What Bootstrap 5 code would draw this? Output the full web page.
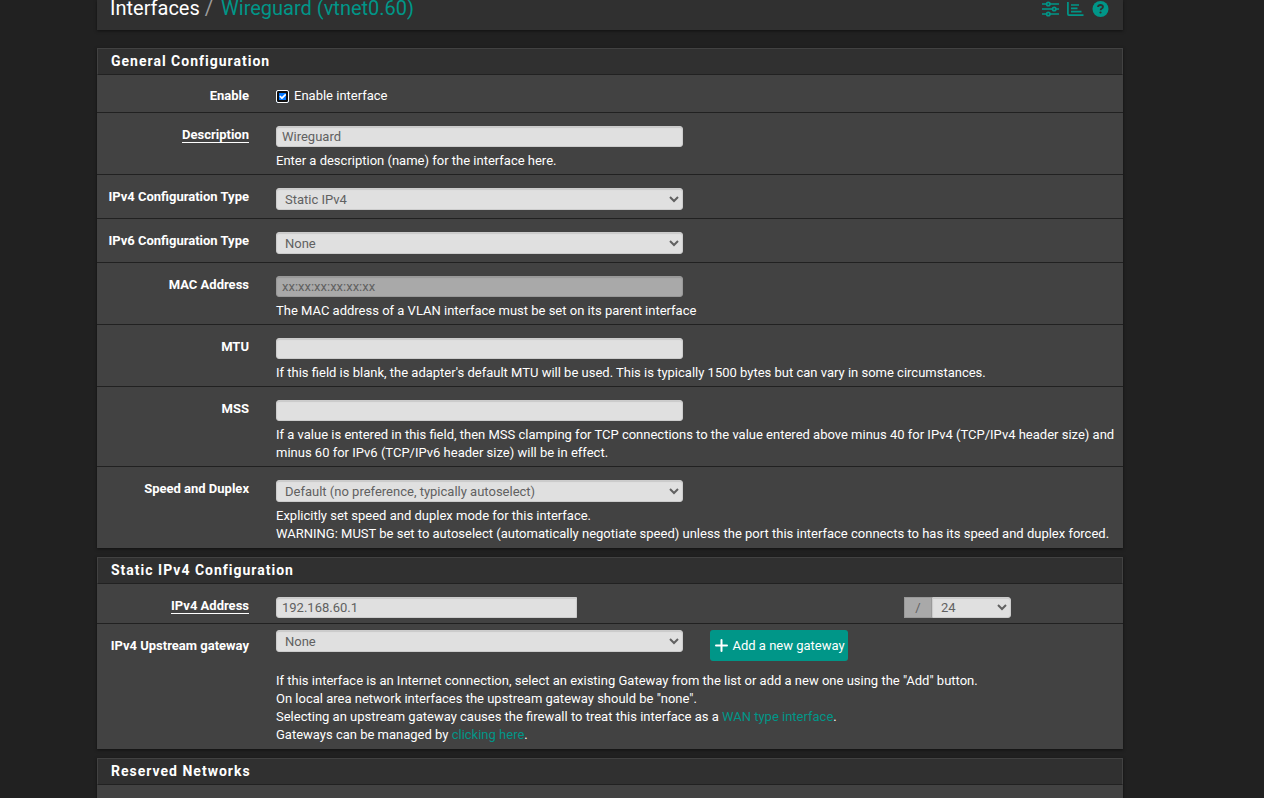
<!DOCTYPE html>
<html lang="en">
<head>
<meta charset="utf-8">
<meta name="viewport" content="width=device-width, initial-scale=1">
<title>Interfaces: Wireguard (vtnet0.60)</title>
<link href="https://cdn.jsdelivr.net/npm/bootstrap@5.3.0/dist/css/bootstrap.min.css" rel="stylesheet">
<script src="https://cdn.jsdelivr.net/npm/bootstrap@5.3.0/dist/js/bootstrap.bundle.min.js"></script>
<style>
html { overflow: hidden; }
body { background: #212121; color: #fff; font: 13px/18px Roboto, sans-serif; }
a { color: #009688; text-decoration: none; }
.page { padding: 0 141px 0 97px; }
.topbar { background: #303030; padding: 0 14px 14px 13px; margin-bottom: 18px; box-shadow: 0 1px 3px rgba(0,0,0,.5); }
.crumbs { font-size: 20px; line-height: 16px; }
.crumbs .breadcrumb-item { padding: 0; }
.crumbs .breadcrumb-item a { color: #009688; }
.crumbs .breadcrumb-item + .breadcrumb-item::before { color: #9e9e9e; padding: 0 8px 0 5px; }
.tools { gap: 8px; }
.tools a { display: block; height: 16px; }
.tools svg { display: block; }
.panel { background: #424242; margin-bottom: 9px; padding-bottom: 1px; box-shadow: 0 1px 3px rgba(0,0,0,.5); }
.panel-title { background: #303030; border: 1px solid #424242; border-bottom-color: #212121; padding: 3px 13px 4px; margin: 0; font-size: 14px; line-height: 18px; font-weight: 700; letter-spacing: 1px; }
.setting { border-bottom: 1px solid #212121; }
.setting:last-child { border-bottom: 0; }
.setting-label { padding: 13px 19px 0 0; text-align: right; font-weight: 700; white-space: nowrap; }
.setting-label.for-check { padding-top: 12px; }
.setting-label.required span { border-bottom: 1px solid #fff; }
.setting-body { padding: 13px 6px 4px 8px; }
.setting-body.only-select { padding-bottom: 8px; }
.setting-body.only-check { padding: 12px 6px 7px 8px; }
.setting-body.only-address { padding-bottom: 5px; }
.setting-body.gateway { padding-top: 6px; }
.half { padding-right: 14px; }
.setting .form-control { height: 21px; padding: 0 5px; border: 1px solid #ccc; border-radius: 3px; background: #e0e0e0; color: #616161; font-size: 13px; line-height: 18px; box-shadow: inset 0 1px 1px rgba(0,0,0,.1); }
.setting select.form-control { height: 22px; appearance: auto; padding: 0 4px; }
.setting .form-control:disabled { background: #a9a9a9; border-color: #999; }
.setting .form-control::placeholder { color: #616161; opacity: 1; }
.help { padding-top: 5px; }
.form-check-input.tick { width: 13px; height: 13px; margin: 3px 5px 0 0; border: 1px solid #fff; border-radius: 2px; box-shadow: inset 0 0 0 2px #101010; }
.form-check-input.tick:checked { background-color: #0075ff; background-size: 11px 11px; border-color: #fff; }
.address { margin-right: 106px; }
.address-ip { width: 41%; }
.setting .address-ip .form-control { border-radius: 3px 0 0 3px; }
.setting .mask .input-group-text { width: 28px; height: 21px; padding: 0; border: 1px solid #999; border-radius: 0; background: #a9a9a9; color: #616161; font-size: 13px; line-height: 18px; justify-content: center; }
.setting .mask select.form-control { width: 79px; height: 21px; border-radius: 0 3px 3px 0; }
.btn-add { --bs-btn-color: #fff; --bs-btn-bg: #009688; --bs-btn-hover-color: #fff; --bs-btn-hover-bg: #00796b; gap: 5px; height: 31px; margin-left: 13px; padding: 0 3px 0 5px; border: 0; border-radius: 3px; font-size: 13px; line-height: 18px; }
.gateway .help { padding-top: 11px; }
</style>
</head>
<body>
<main class="page">
  <header class="topbar d-flex justify-content-between">
    <nav aria-label="breadcrumb">
      <ol class="breadcrumb crumbs mb-0">
        <li class="breadcrumb-item">Interfaces</li>
        <li class="breadcrumb-item"><a href="#">Wireguard (vtnet0.60)</a></li>
      </ol>
    </nav>
    <div class="tools d-flex">
      <a href="#" aria-label="Advanced settings"><svg width="17" height="17" viewBox="0 0 17 17" fill="none" stroke="#009688" stroke-width="1.7"><path d="M0 4h4.500M8 4h9M0 9h10.500M14 9h3M0 14h4.500M8 14h9"/><circle cx="6.300" cy="4" r="1.700"/><circle cx="12.200" cy="9" r="1.700"/><circle cx="6.300" cy="14" r="1.700"/></svg></a>
      <a href="#" aria-label="Status"><svg width="17" height="17" viewBox="0 0 17 17" fill="none" stroke="#009688" stroke-width="1.700"><path d="M.9 2v12.100q0 1 1 1H16.500M4 5h8M4 8.300h6.500M4 11.600h10.500" /></svg></a>
      <a href="#" aria-label="Help"><svg width="17" height="17" viewBox="0 0 17 17"><circle cx="8.500" cy="9" r="8" fill="#009688"/><path d="M6 7q.2-2 2.500-2t2.500 1.800q0 1-1.200 1.700-1.200.6-1.200 1.700" fill="none" stroke="#303030" stroke-width="1.800"/><circle cx="8.500" cy="12.500" r="1.100" fill="#303030"/></svg></a>
    </div>
  </header>

  <form>
    <section class="panel">
      <h2 class="panel-title">General Configuration</h2>
      <div class="row g-0 setting">
        <div class="col-2 setting-label for-check">Enable</div>
        <div class="col-10 setting-body only-check">
          <div class="d-flex"><input class="form-check-input tick" type="checkbox" id="enable" checked><label for="enable">Enable interface</label></div>
        </div>
      </div>
      <div class="row g-0 setting">
        <label class="col-2 setting-label required" for="descr"><span>Description</span></label>
        <div class="col-10 setting-body">
          <div class="row g-0"><div class="col-6 half"><input class="form-control" type="text" id="descr" value="Wireguard"></div></div>
          <div class="help">Enter a description (name) for the interface here.</div>
        </div>
      </div>
      <div class="row g-0 setting">
        <label class="col-2 setting-label" for="type4">IPv4 Configuration Type</label>
        <div class="col-10 setting-body only-select">
          <div class="row g-0"><div class="col-6 half"><select class="form-control" id="type4"><option>Static IPv4</option></select></div></div>
        </div>
      </div>
      <div class="row g-0 setting">
        <label class="col-2 setting-label" for="type6">IPv6 Configuration Type</label>
        <div class="col-10 setting-body only-select">
          <div class="row g-0"><div class="col-6 half"><select class="form-control" id="type6"><option>None</option></select></div></div>
        </div>
      </div>
      <div class="row g-0 setting">
        <label class="col-2 setting-label" for="mac">MAC Address</label>
        <div class="col-10 setting-body">
          <div class="row g-0"><div class="col-6 half"><input class="form-control" type="text" id="mac" placeholder="xx:xx:xx:xx:xx:xx" disabled></div></div>
          <div class="help">The MAC address of a VLAN interface must be set on its parent interface</div>
        </div>
      </div>
      <div class="row g-0 setting">
        <label class="col-2 setting-label" for="mtu">MTU</label>
        <div class="col-10 setting-body">
          <div class="row g-0"><div class="col-6 half"><input class="form-control" type="text" id="mtu"></div></div>
          <div class="help">If this field is blank, the adapter's default MTU will be used. This is typically 1500 bytes but can vary in some circumstances.</div>
        </div>
      </div>
      <div class="row g-0 setting">
        <label class="col-2 setting-label" for="mss">MSS</label>
        <div class="col-10 setting-body">
          <div class="row g-0"><div class="col-6 half"><input class="form-control" type="text" id="mss"></div></div>
          <div class="help">If a value is entered in this field, then MSS clamping for TCP connections to the value entered above minus 40 for IPv4 (TCP/IPv4 header size) and minus 60 for IPv6 (TCP/IPv6 header size) will be in effect.</div>
        </div>
      </div>
      <div class="row g-0 setting">
        <label class="col-2 setting-label" for="media">Speed and Duplex</label>
        <div class="col-10 setting-body">
          <div class="row g-0"><div class="col-6 half"><select class="form-control" id="media"><option>Default (no preference, typically autoselect)</option></select></div></div>
          <div class="help">Explicitly set speed and duplex mode for this interface.<br>WARNING: MUST be set to autoselect (automatically negotiate speed) unless the port this interface connects to has its speed and duplex forced.</div>
        </div>
      </div>
    </section>

    <section class="panel">
      <h2 class="panel-title">Static IPv4 Configuration</h2>
      <div class="row g-0 setting">
        <label class="col-2 setting-label required" for="ip"><span>IPv4 Address</span></label>
        <div class="col-10 setting-body only-address">
          <div class="address d-flex justify-content-between">
            <div class="address-ip"><input class="form-control" type="text" id="ip" value="192.168.60.1"></div>
            <div class="mask d-flex"><span class="input-group-text">/</span><select class="form-control" aria-label="Subnet mask"><option>24</option></select></div>
          </div>
        </div>
      </div>
      <div class="row g-0 setting">
        <label class="col-2 setting-label" for="gw">IPv4 Upstream gateway</label>
        <div class="col-10 setting-body gateway">
          <div class="row g-0">
            <div class="col-6 half"><select class="form-control" id="gw"><option>None</option></select></div>
            <div class="col-6"><button type="button" class="btn btn-add d-flex align-items-center"><svg width="13" height="13" viewBox="0 0 13 13" stroke="#fff" stroke-width="2" stroke-linecap="round"><path d="M6.500 1v11M1 6.500h11"/></svg>Add a new gateway</button></div>
          </div>
          <div class="help">If this interface is an Internet connection, select an existing Gateway from the list or add a new one using the "Add" button.<br>On local area network interfaces the upstream gateway should be "none".<br>Selecting an upstream gateway causes the firewall to treat this interface as a <a href="#">WAN type interface</a>.<br>Gateways can be managed by <a href="#">clicking here</a>.</div>
        </div>
      </div>
    </section>

    <section class="panel">
      <h2 class="panel-title">Reserved Networks</h2>
      <div class="row g-0 setting">
        <div class="col-10 setting-body"></div>
      </div>
    </section>
  </form>
</main>
</body>
</html>
